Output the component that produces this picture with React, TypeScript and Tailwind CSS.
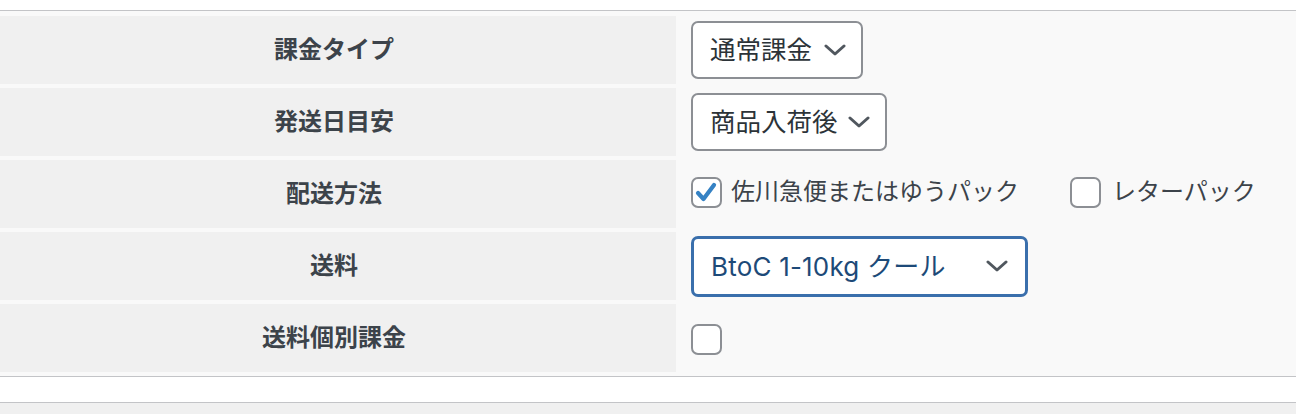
import React from "react";

const Chevron = ({ className = "" }: { className?: string }) => (
	<svg width="22" height="12" viewBox="0 0 22 12" className={className}>
		<path
			d="M2 2 L11 10 L20 2"
			fill="none"
			stroke="#50575e"
			strokeWidth="3"
			strokeLinecap="round"
			strokeLinejoin="round"
		/>
	</svg>
);

const Checkbox = ({ checked = false }: { checked?: boolean }) => (
	<span className="w-[31px] h-[31px] shrink-0 rounded-[7px] border-2 border-[#8c8f94] bg-white flex items-center justify-center">
		{checked && (
			<svg width="27" height="27" viewBox="0 0 27 27">
				<path
					d="M5 14 L10.5 20 L21 6"
					fill="none"
					stroke="#3582c4"
					strokeWidth="4.2"
					strokeLinecap="round"
					strokeLinejoin="round"
				/>
			</svg>
		)}
	</span>
);

const SelectBox = ({ value, width }: { value: string; width: string }) => (
	<div
		className={`${width} h-[58px] flex items-center justify-between pl-[17px] pr-[15px] bg-white border-2 border-[#8c8f94] rounded-[7px] text-[25.5px] text-[#2c3338]`}
	>
		<span>{value}</span>
		<Chevron />
	</div>
);

const Row = ({ label, children }: { label: string; children: React.ReactNode }) => (
	<div className="grid grid-cols-[676px_1fr] h-[68px]">
		<div className="bg-[#f0f0f0] flex items-center justify-center pr-[8px] font-bold text-[24px] text-[#3c434a]">
			{label}
		</div>
		<div className="flex items-center pl-[15px]">{children}</div>
	</div>
);

export default function App() {
	return (
		<div className="w-[1296px] h-[414px] overflow-hidden bg-white pt-[10px] font-['Inter','Noto_Sans_CJK_JP',sans-serif]">
			{/* Settings table */}
			<div className="border-y border-[#c3c4c7] bg-[#f9f9f9] flex flex-col gap-[4px] pt-[5px] pb-[4px]">
				<Row label="課金タイプ">
					<SelectBox value="通常課金" width="w-[172px]" />
				</Row>
				<Row label="発送日目安">
					<SelectBox value="商品入荷後" width="w-[196px]" />
				</Row>
				<Row label="配送方法">
					<div className="flex items-center -mt-[4px] text-[24px] text-[#3c434a]">
						<label className="flex items-center gap-[9px]">
							<Checkbox checked />
							<span>佐川急便またはゆうパック</span>
						</label>
						<label className="flex items-center gap-[11px] ml-[51px]">
							<Checkbox />
							<span>レターパック</span>
						</label>
					</div>
				</Row>
				<Row label="送料">
					<div className="w-[337px] h-[61px] flex items-center justify-between pl-[17px] pr-[17px] bg-white border-[3px] border-[#3a6fac] rounded-[7px] text-[26px] tracking-[0.2px] text-[#1d4a78]">
						<span>BtoC 1-10kg クール</span>
						<Chevron />
					</div>
				</Row>
				<Row label="送料個別課金">
					<div className="mt-[3px]">
						<Checkbox />
					</div>
				</Row>
			</div>
			<div className="h-[25px] bg-white" />
			<div className="h-[20px] border-t border-[#c3c4c7] bg-[#f0f0f0]" />
		</div>
	);
}
